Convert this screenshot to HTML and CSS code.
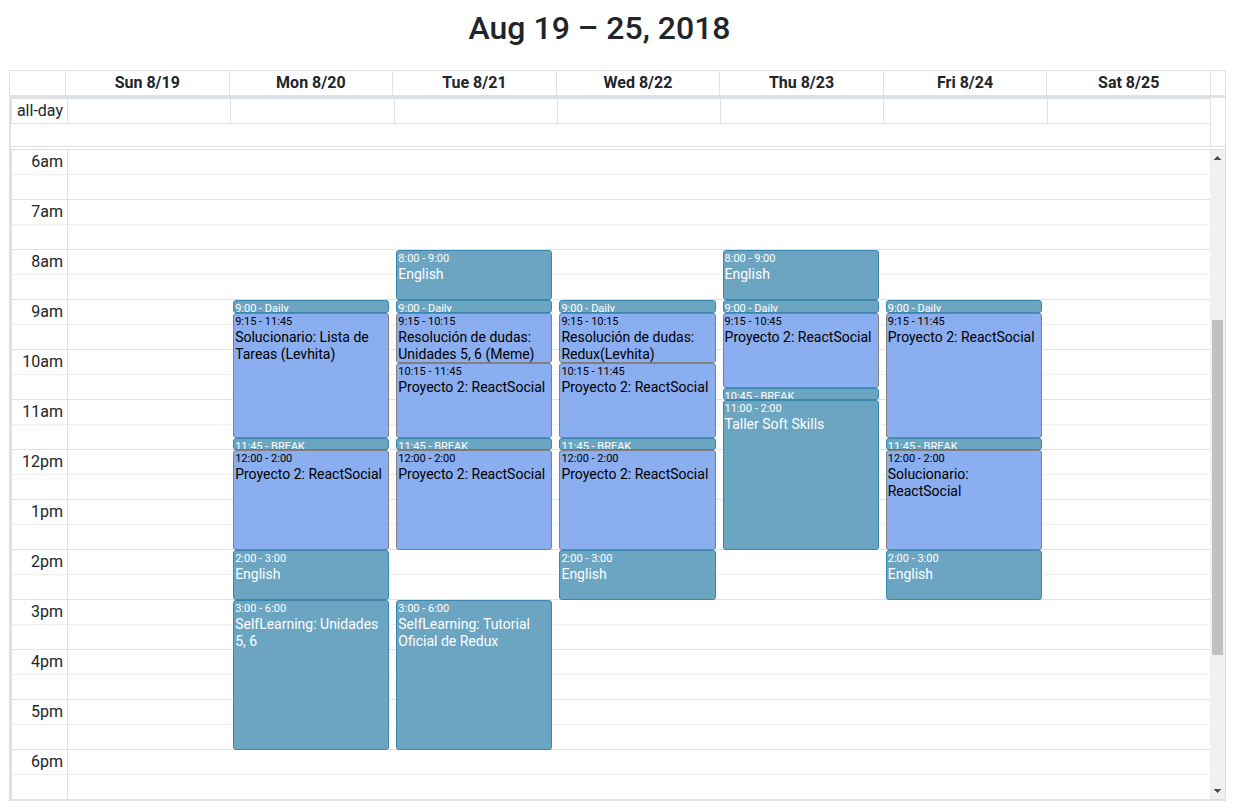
FILE: index.html
```html
<!DOCTYPE html>
<html lang="en">
<head>
<meta charset="utf-8">
<title>Aug 19 – 25, 2018</title>
<link rel="stylesheet" href="styles.css">
</head>
<body>
<header class="toolbar"><h2 class="title">Aug 19 – 25, 2018</h2></header>
<main class="calendar">
  <table class="head">
    <thead>
      <tr><th class="axis"></th><th>Sun 8/19</th><th>Mon 8/20</th><th>Tue 8/21</th><th>Wed 8/22</th><th>Thu 8/23</th><th>Fri 8/24</th><th>Sat 8/25</th><th class="gutter"></th></tr>
    </thead>
  </table>
  <div class="body">
    <section class="all-day">
      <table class="all-day-row">
        <tbody><tr><th class="axis" scope="row">all-day</th><td></td><td></td><td></td><td></td><td></td><td></td><td></td></tr></tbody>
      </table>
    </section>
    <section class="scroller">
      <div class="time-grid">
        <table class="slats"><tbody id="slats"></tbody></table>
        <div class="days" id="days"></div>
      </div>
      <div class="scrollbar" aria-hidden="true">
        <svg class="arrow" viewBox="0 0 15 16"><path d="M4 10h7v-1h-1v-1h-1v-1h-1v-1h-1v1h-1v1h-1v1h-1z"/></svg>
        <div class="track"><div class="thumb"></div></div>
        <svg class="arrow" viewBox="0 0 15 16"><path d="M4 6h7v1h-1v1h-1v1h-1v1h-1v-1h-1v-1h-1v-1h-1z"/></svg>
      </div>
    </section>
  </div>
</main>
<script src="calendar.js"></script>
</body>
</html>
```
FILE: styles.css
```css
* {
  box-sizing: border-box;
}

body {
  --line: #dee2e6;
  margin: 0;
  padding: 9px 9px 0;
  background: #fff;
  color: #212529;
  font-family: Roboto, "Liberation Sans", sans-serif;
  font-size: 16px;
  line-height: 24px;
}

.toolbar {
  padding-right: 36px;
  margin-bottom: 23px;
}

.title {
  margin: 0;
  font-size: 32px;
  font-weight: 500;
  line-height: 38px;
  text-align: center;
}

table {
  width: 100%;
  table-layout: fixed;
  border-collapse: separate;
  border-spacing: 0;
}

th,
td {
  padding: 0;
}

.head {
  border: 1px solid var(--line);
  border-bottom-width: 3px;
}

.head th {
  height: 24px;
  border-right: 1px solid var(--line);
  font-weight: 700;
}

.head .axis {
  width: 56px;
}

.head .gutter {
  width: 14px;
  border-right: 0;
}

.body {
  border: 1px solid var(--line);
  border-width: 0 1px 2px 2px;
}

.all-day {
  padding-right: 14px;
  border-bottom: 1px solid var(--line);
  margin-bottom: 2px;
}

.all-day-row {
  border-top: 1px solid var(--line);
}

.all-day-row td,
.all-day-row th {
  height: 25px;
  border-bottom: 1px solid var(--line);
  border-right: 1px solid var(--line);
}

.all-day::after {
  content: "";
  display: block;
  height: 22px;
  border-right: 1px solid var(--line);
}

.all-day-row .axis,
.slats .axis {
  width: 57px;
  padding: 0 4px;
  border-left: 1px solid var(--line);
  border-right: 1px solid var(--line);
  font-weight: 400;
  text-align: right;
  white-space: nowrap;
}

.scroller {
  display: flex;
}

.time-grid {
  position: relative;
  flex: 1;
}

.slats th,
.slats td {
  height: 25px;
  border-top: 1px solid var(--line);
}

.slats .minor th,
.slats .minor td {
  border-top-style: dotted;
}

.days {
  position: absolute;
  inset: 1px 0 0 57px;
  display: grid;
  grid-template-columns: repeat(7, 1fr);
}

.day {
  position: relative;
  margin: 0 5px 0 2px;
}

.event {
  position: absolute;
  left: 0;
  right: 0;
  top: calc((var(--start) - 6) * 50px);
  height: calc((var(--end) - var(--start)) * 50px);
  overflow: hidden;
  padding: 0 1px;
  border: 1px solid #3a87ad;
  border-radius: 3px;
  background: #6ba5c2;
  color: #fff;
  font-size: 14px;
  line-height: 17px;
  text-decoration: none;
}

.event.project {
  border-color: #808080;
  background: #8aaef0;
  color: #000;
}

.event .time {
  display: block;
  font-size: 11px;
  line-height: 15px;
  white-space: nowrap;
}

.scrollbar {
  display: flex;
  flex-direction: column;
  width: 15px;
  border-top: 1px solid var(--line);
  background: #f1f1f1;
}

.arrow {
  width: 15px;
  height: 16px;
  fill: #505050;
  shape-rendering: crispEdges;
}

.track {
  flex: 1;
  padding: 154px 2px 0;
}

.thumb {
  height: 335px;
  background: #c1c1c1;
}
```
FILE: calendar.js
```js
const project = "Proyecto 2: ReactSocial";
const days = [
  [],
  [
    [9, 9.25, "9:00", "Daily"],
    [9.25, 11.75, "9:15 - 11:45", "Solucionario: Lista de Tareas (Levhita)", true],
    [11.75, 12, "11:45", "BREAK"],
    [12, 14, "12:00 - 2:00", project, true],
    [14, 15, "2:00 - 3:00", "English"],
    [15, 18, "3:00 - 6:00", "SelfLearning: Unidades 5, 6"]
  ],
  [
    [8, 9, "8:00 - 9:00", "English"],
    [9, 9.25, "9:00", "Daily"],
    [9.25, 10.25, "9:15 - 10:15", "Resolución de dudas: Unidades 5, 6 (Meme)", true],
    [10.25, 11.75, "10:15 - 11:45", project, true],
    [11.75, 12, "11:45", "BREAK"],
    [12, 14, "12:00 - 2:00", project, true],
    [15, 18, "3:00 - 6:00", "SelfLearning: Tutorial Oficial de Redux"]
  ],
  [
    [9, 9.25, "9:00", "Daily"],
    [9.25, 10.25, "9:15 - 10:15", "Resolución de dudas: Redux(Levhita)", true],
    [10.25, 11.75, "10:15 - 11:45", project, true],
    [11.75, 12, "11:45", "BREAK"],
    [12, 14, "12:00 - 2:00", project, true],
    [14, 15, "2:00 - 3:00", "English"]
  ],
  [
    [8, 9, "8:00 - 9:00", "English"],
    [9, 9.25, "9:00", "Daily"],
    [9.25, 10.75, "9:15 - 10:45", project, true],
    [10.75, 11, "10:45", "BREAK"],
    [11, 14, "11:00 - 2:00", "Taller Soft Skills"]
  ],
  [
    [9, 9.25, "9:00", "Daily"],
    [9.25, 11.75, "9:15 - 11:45", project, true],
    [11.75, 12, "11:45", "BREAK"],
    [12, 14, "12:00 - 2:00", "Solucionario: ReactSocial", true],
    [14, 15, "2:00 - 3:00", "English"]
  ],
  []
];

const slats = document.getElementById("slats");
for (let hour = 6; hour <= 18; hour++) {
  const label = ((hour + 11) % 12 + 1) + (hour < 12 ? "am" : "pm");
  slats.insertAdjacentHTML("beforeend",
    `<tr><th class="axis" scope="row">${label}</th><td></td></tr>` +
    `<tr class="minor"><th class="axis"></th><td></td></tr>`);
}

const grid = document.getElementById("days");
for (const events of days) {
  const column = document.createElement("div");
  column.className = "day";
  for (const [start, end, time, name, isProject] of events) {
    const isShort = end - start < 0.5;
    const link = document.createElement("a");
    link.href = "#";
    link.className = "event" + (isProject ? " project" : "");
    link.style.setProperty("--start", start);
    link.style.setProperty("--end", end);
    link.innerHTML = isShort
      ? `<span class="time">${time} - ${name}</span>`
      : `<span class="time">${time}</span>${name}`;
    column.append(link);
  }
  grid.append(column);
}
```
